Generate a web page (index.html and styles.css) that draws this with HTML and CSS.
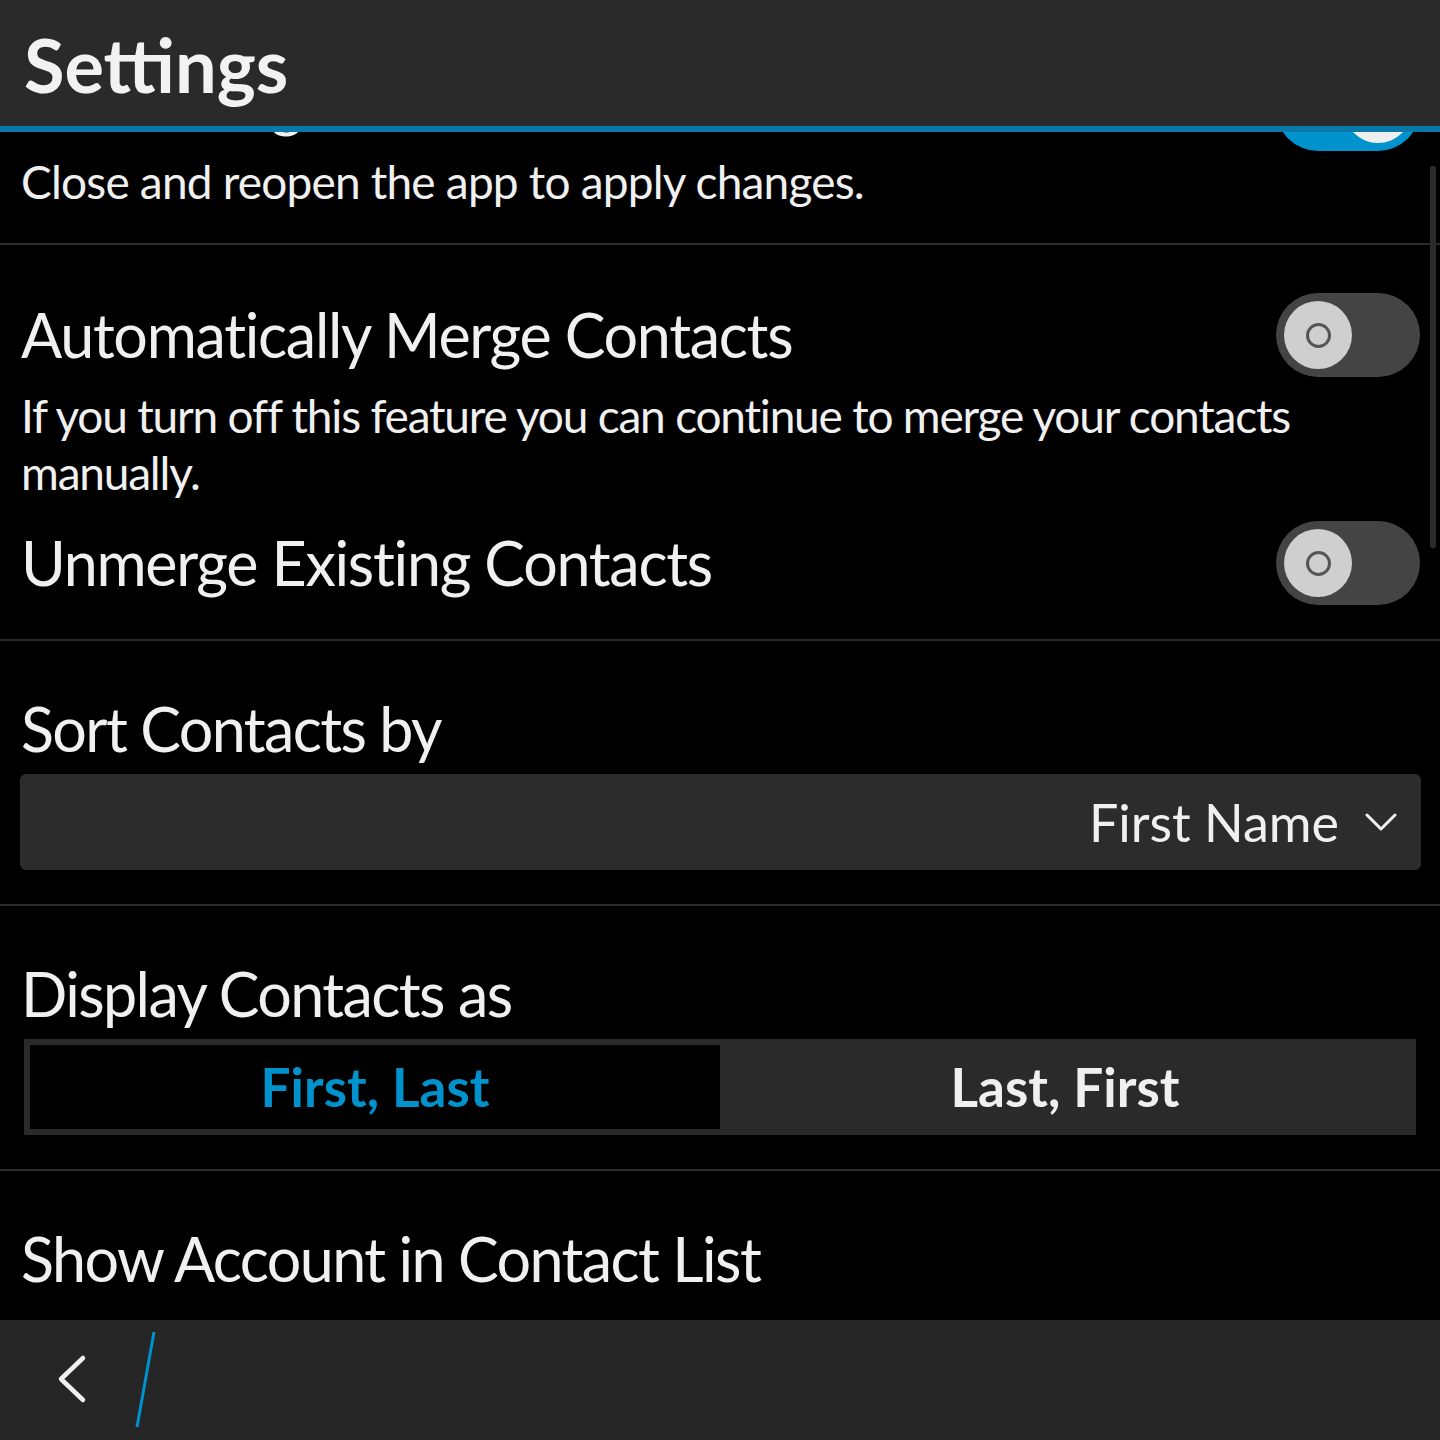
FILE: index.html
```html
<!DOCTYPE html>
<html lang="en">
<head>
<meta charset="utf-8">
<title>Settings</title>
<link rel="stylesheet" href="styles.css">
</head>
<body>
<div class="screen">
  <header class="appbar">
    <h1 class="appbar-title">Settings</h1>
  </header>

  <main class="content">
    <div class="list">
      <section class="section first">
        <div class="row">
          <span class="label hidden-label">Show Images</span>
          <span class="toggle on"><span class="knob"></span></span>
        </div>
        <p class="desc">Close and reopen the app to apply changes.</p>
      </section>

      <section class="section merge">
        <div class="row">
          <span class="label">Automatically Merge Contacts</span>
          <span class="toggle"><span class="knob"><span class="ring"></span></span></span>
        </div>
        <p class="desc">If you turn off this feature you can continue to merge your contacts manually.</p>
        <div class="row row-gap">
          <span class="label">Unmerge Existing Contacts</span>
          <span class="toggle"><span class="knob"><span class="ring"></span></span></span>
        </div>
      </section>

      <section class="section plain">
        <div class="label block">Sort Contacts by</div>
        <div class="dropdown">
          <span class="dropdown-value">First Name</span>
          <svg class="chev-down" width="32" height="18" viewBox="0 0 32 18"><polyline points="2,2 16,16 30,2" fill="none" stroke="#f0f0f0" stroke-width="3" stroke-linecap="round" stroke-linejoin="round"/></svg>
        </div>
      </section>

      <section class="section plain">
        <div class="label block">Display Contacts as</div>
        <div class="segmented">
          <span class="seg selected">First, Last</span>
          <span class="seg">Last, First</span>
        </div>
      </section>

      <section class="section plain last">
        <div class="label block">Show Account in Contact List</div>
      </section>
    </div>
    <div class="scrollbar"></div>
  </main>

  <footer class="actionbar">
    <svg class="back" width="40" height="60" viewBox="0 0 40 60"><polyline points="31,7 9,28 31,49" fill="none" stroke="#f0f0f0" stroke-width="4.5" stroke-linecap="round" stroke-linejoin="round"/></svg>
    <svg class="slash" width="30" height="100" viewBox="0 0 30 100"><line x1="24" y1="2" x2="7" y2="97" stroke="#0092cc" stroke-width="3"/></svg>
  </footer>
</div>
</body>
</html>
```

FILE: styles.css
```css
* { box-sizing: border-box; }
html, body { margin: 0; padding: 0; background: #000; }
body {
  font-family: Lato, "Open Sans", "Liberation Sans", sans-serif;
  color: #f0f0f0;
}
.screen {
  width: 1440px;
  height: 1440px;
  display: flex;
  flex-direction: column;
  overflow: hidden;
  background: #000;
}
.appbar {
  height: 132px;
  flex: none;
  background: #2a2a2a;
  border-bottom: 6px solid #0a78a8;
  padding: 0 0 0 24px;
  position: relative;
  z-index: 2;
}
.appbar-title {
  margin: 0;
  font-size: 74px;
  font-weight: 700;
  line-height: 130px;
  color: #f2f2f2;
  letter-spacing: 0;
}
.content {
  flex: 1;
  position: relative;
  overflow: hidden;
}
.list {
  margin-top: -113px;
}
.section {
  border-bottom: 2px solid #2c2c2c;
  padding: 48px 20px 33px 21px;
}
.section.last { border-bottom: none; }
.row {
  height: 84px;
  display: flex;
  align-items: center;
  justify-content: space-between;
}
.label {
  font-size: 61px;
  line-height: 72px;
  letter-spacing: -1.3px;
  white-space: nowrap;
}
.hidden-label { margin-bottom: 14px; }
.label.block { display: block; }
.desc {
  margin: 2px 0 0;
  font-size: 46px;
  line-height: 57px;
  letter-spacing: -0.8px;
  padding-right: 100px;
}
.merge .desc { margin-top: 10px; letter-spacing: -1.2px; }
.merge { padding-bottom: 34px; }
.merge .row-gap { margin-top: 20px; }
.toggle {
  width: 144px;
  height: 84px;
  border-radius: 42px;
  background: #444;
  display: flex;
  align-items: center;
  padding: 0 8px;
  flex: none;
}
.toggle.on {
  background: #0092cc;
  justify-content: flex-end;
}
.knob {
  width: 68px;
  height: 68px;
  border-radius: 50%;
  background: #cfcfcf;
  display: flex;
  align-items: center;
  justify-content: center;
}
.toggle.on .knob { background: #efefef; }
.ring {
  width: 25px;
  height: 25px;
  border-radius: 50%;
  border: 3px solid #555;
}
.section.plain { padding-top: 52px; padding-bottom: 34px; }
.section.plain .label { letter-spacing: -1.6px; }
.dropdown {
  margin: 9px -1px 0 -1px;
  height: 96px;
  background: #2c2c2c;
  border-radius: 6px;
  display: flex;
  align-items: center;
  justify-content: flex-end;
  padding-right: 24px;
}
.dropdown-value {
  font-size: 52px;
  letter-spacing: 0;
  margin-right: 26px;
}
.chev-down { display: block; }
.segmented {
  margin: 9px 4px 0 3px;
  height: 96px;
  background: #2a2a2a;
  padding: 6px;
  display: flex;
}
.seg {
  flex: 1;
  display: flex;
  align-items: center;
  justify-content: center;
  font-size: 53px;
  font-weight: 700;
  letter-spacing: 0;
  color: #f0f0f0;
  padding-bottom: 2px;
}
.seg.selected {
  background: #000;
  color: #0092cc;
}
.scrollbar {
  position: absolute;
  right: 4px;
  top: 34px;
  width: 6px;
  height: 382px;
  background: #2b2b2b;
  border-radius: 2px;
}
.actionbar {
  height: 120px;
  flex: none;
  background: #262626;
  display: flex;
  align-items: center;
  padding-left: 52px;
  position: relative;
  z-index: 2;
}
.back { display: block; margin-top: 2px; }
.slash { display: block; margin-left: 38px; }
```
